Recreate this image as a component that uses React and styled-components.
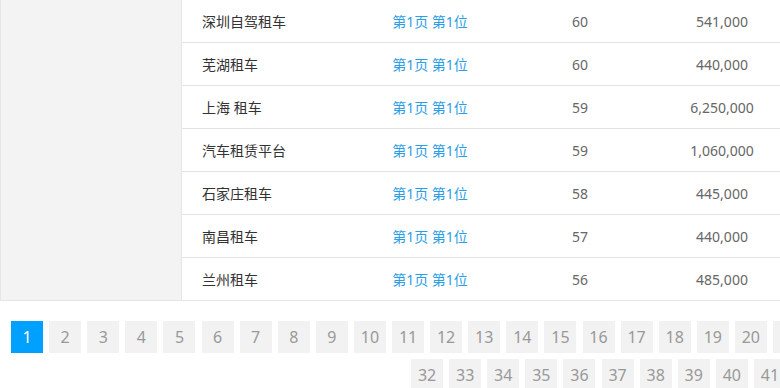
import styled, { createGlobalStyle } from "styled-components";

const rows = [
    { keyword: "深圳自驾租车", rank: "第1页 第1位", index: 60, price: "541,000" },
    { keyword: "芜湖租车", rank: "第1页 第1位", index: 60, price: "440,000" },
    { keyword: "上海 租车", rank: "第1页 第1位", index: 59, price: "6,250,000" },
    { keyword: "汽车租赁平台", rank: "第1页 第1位", index: 59, price: "1,060,000" },
    { keyword: "石家庄租车", rank: "第1页 第1位", index: 58, price: "445,000" },
    { keyword: "南昌租车", rank: "第1页 第1位", index: 57, price: "440,000" },
    { keyword: "兰州租车", rank: "第1页 第1位", index: 56, price: "485,000" },
];

const pages = Array.from({ length: 41 }, (_, i) => i + 1);

export default function App() {
    return (
        <>
            <GlobalStyle />
            <Page>
                <Content>
                    <Sidebar />
                    <Table>
                        {rows.map((row, i) => (
                            <Row key={i} last={i === rows.length - 1}>
                                <Keyword>{row.keyword}</Keyword>
                                <Rank>{row.rank}</Rank>
                                <Cell>{row.index}</Cell>
                                <Cell>{row.price}</Cell>
                                <Cell />
                            </Row>
                        ))}
                    </Table>
                </Content>
                <Pagination>
                    {pages.map(p => (
                        <PageButton key={p} active={p === 1}>{p}</PageButton>
                    ))}
                </Pagination>
            </Page>
        </>
    )
}

const GlobalStyle = createGlobalStyle`
    body {
        margin: 0;
        overflow: hidden;
        background: #ffffff;
        font-family: "Noto Sans", "Noto Sans CJK SC", sans-serif;
    }
`
const Page = styled.div`
    width: 1197px;
`
const Content = styled.div`
    display: flex;
    border-bottom: 1px solid #e5e5e5;
`
const Sidebar = styled.div`
    width: 180px;
    flex-shrink: 0;
    background-color: #f3f3f3;
    border-left: 1px solid #e6e6e6;
    border-right: 1px solid #e6e6e6;
`
const Table = styled.div`
    flex: 1;
    display: flex;
    flex-direction: column;
`
const Row = styled.div`
    display: grid;
    grid-template-columns: 173px 150px 150px 134px 1fr;
    align-items: center;
    height: 42px;
    border-bottom: ${props => props.last ? "none" : "1px solid #e4e4e4"};
    font-size: 14px;
`
const Keyword = styled.span`
    padding-left: 20px;
    color: #333333;
`
const Rank = styled.span`
    text-align: center;
    color: #2b9ee8;
`
const Cell = styled.span`
    text-align: center;
    color: #666666;
`
const Pagination = styled.div`
    display: flex;
    flex-wrap: wrap;
    justify-content: center;
    gap: 6px 6.1px;
    margin-top: 20px;
`
const PageButton = styled.a`
    width: 32px;
    height: 32px;
    line-height: 32px;
    text-align: center;
    font-size: 16px;
    background-color: ${props => props.active ? "#00a0ff" : "#f2f2f2"};
    color: ${props => props.active ? "#ffffff" : "#999999"};
    cursor: pointer;
`
